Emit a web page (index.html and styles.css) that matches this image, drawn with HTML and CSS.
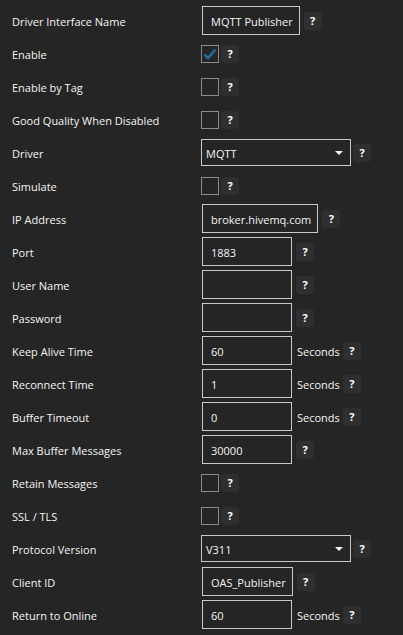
FILE: index.html
```html
<!DOCTYPE html>
<html>
<head>
<meta charset="utf-8">
<link rel="stylesheet" href="styles.css">
</head>
<body>
<div class="form">
  <div class="row"><div class="label">Driver Interface Name</div><div class="ctrl"><span class="field">MQTT Publisher</span><span class="help">?</span></div></div>
  <div class="row"><div class="label">Enable</div><div class="ctrl"><span class="check"><svg width="16" height="16" viewBox="0 0 16 16"><polyline points="2.5,8.5 6,12 13.5,3.5" fill="none" stroke="#1f6ea4" stroke-width="2.6"/></svg></span><span class="help">?</span></div></div>
  <div class="row"><div class="label">Enable by Tag</div><div class="ctrl"><span class="check"></span><span class="help">?</span></div></div>
  <div class="row"><div class="label">Good Quality When Disabled</div><div class="ctrl"><span class="check"></span><span class="help">?</span></div></div>
  <div class="row"><div class="label">Driver</div><div class="ctrl"><span class="select">MQTT<span class="arrow"></span></span><span class="help">?</span></div></div>
  <div class="row"><div class="label">Simulate</div><div class="ctrl"><span class="check"></span><span class="help">?</span></div></div>
  <div class="row"><div class="label">IP Address</div><div class="ctrl"><span class="field">broker.hivemq.com</span><span class="help">?</span></div></div>
  <div class="row"><div class="label">Port</div><div class="ctrl"><span class="field">1883</span><span class="help">?</span></div></div>
  <div class="row"><div class="label">User Name</div><div class="ctrl"><span class="field"></span><span class="help">?</span></div></div>
  <div class="row"><div class="label">Password</div><div class="ctrl"><span class="field"></span><span class="help">?</span></div></div>
  <div class="row"><div class="label">Keep Alive Time</div><div class="ctrl"><span class="field unit-field">60</span><span class="unit">Seconds</span><span class="help">?</span></div></div>
  <div class="row"><div class="label">Reconnect Time</div><div class="ctrl"><span class="field unit-field">1</span><span class="unit">Seconds</span><span class="help">?</span></div></div>
  <div class="row"><div class="label">Buffer Timeout</div><div class="ctrl"><span class="field unit-field">0</span><span class="unit">Seconds</span><span class="help">?</span></div></div>
  <div class="row"><div class="label">Max Buffer Messages</div><div class="ctrl"><span class="field">30000</span><span class="help">?</span></div></div>
  <div class="row"><div class="label">Retain Messages</div><div class="ctrl"><span class="check"></span><span class="help">?</span></div></div>
  <div class="row"><div class="label">SSL / TLS</div><div class="ctrl"><span class="check"></span><span class="help">?</span></div></div>
  <div class="row"><div class="label">Protocol Version</div><div class="ctrl"><span class="select">V311<span class="arrow"></span></span><span class="help">?</span></div></div>
  <div class="row"><div class="label">Client ID</div><div class="ctrl"><span class="field">OAS_Publisher</span><span class="help">?</span></div></div>
  <div class="row"><div class="label">Return to Online</div><div class="ctrl"><span class="field unit-field">60</span><span class="unit">Seconds</span><span class="help">?</span></div></div>
</div>
</body>
</html>
```
FILE: styles.css
```css
html, body {
  margin: 0;
  padding: 0;
  background: #252525;
}
body {
  font-family: "Open Sans", "Liberation Sans", sans-serif;
  font-size: 11px;
  color: #f4f4f4;
}
.form {
  padding: 4px 0 0 12px;
}
.row {
  display: grid;
  grid-template-columns: 189px auto;
  align-items: center;
  height: 33px;
}
.label {
  line-height: 16px;
  padding-top: 2px;
}
.ctrl {
  display: flex;
  align-items: center;
}
.field {
  box-sizing: border-box;
  display: inline-flex;
  align-items: center;
  height: 29px;
  min-width: 90px;
  margin-left: 1px;
  margin-right: 4px;
  padding: 1px 6px 0 8px;
  border: 1px solid #c9c9c9;
  white-space: nowrap;
}
.unit-field {
  margin-right: 0;
}
.unit {
  margin: 0 3px 0 5px;
  padding-top: 1px;
}
.check {
  box-sizing: border-box;
  width: 18px;
  height: 18px;
  border: 1px solid #8a8a8a;
  margin-right: 2px;
  display: flex;
  align-items: center;
  justify-content: center;
}
.check svg {
  display: block;
}
.select {
  box-sizing: border-box;
  position: relative;
  display: flex;
  align-items: center;
  width: 150px;
  height: 27px;
  padding: 1px 0 0 4px;
  border: 1px solid #c9c9c9;
  margin-right: 2px;
}
.arrow {
  position: absolute;
  right: 7px;
  top: 11px;
  width: 0;
  height: 0;
  border-left: 4px solid transparent;
  border-right: 4px solid transparent;
  border-top: 4px solid #f2f2f2;
}
.help {
  width: 18px;
  height: 18px;
  border-radius: 3px;
  background: #2f2f2f;
  color: #ffffff;
  font-weight: bold;
  font-size: 11px;
  display: flex;
  align-items: center;
  justify-content: center;
  line-height: 1;
}
```
